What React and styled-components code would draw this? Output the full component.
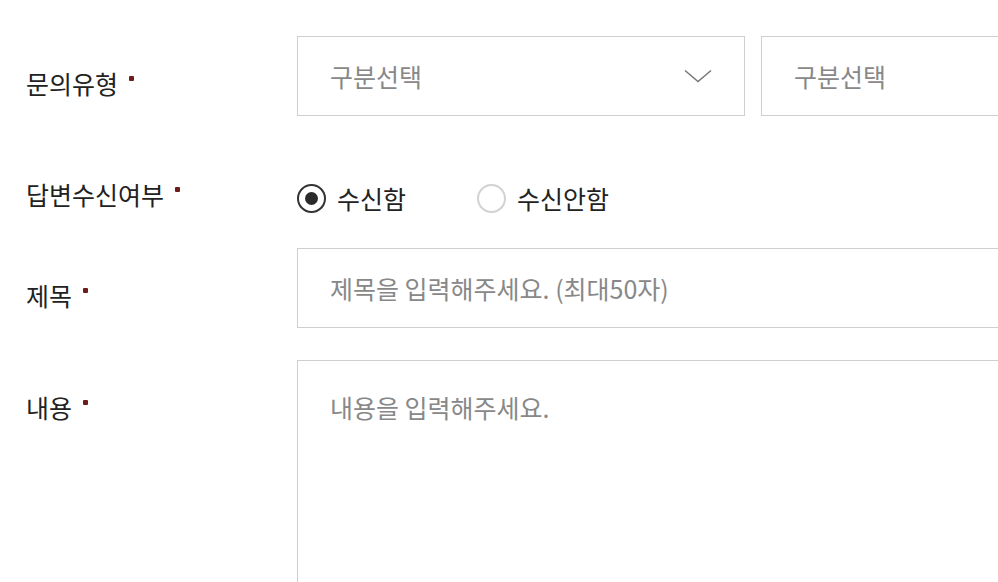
import React from "react";
import styled, { createGlobalStyle } from "styled-components";

const Global = createGlobalStyle`
  html, body { margin: 0; padding: 0; background: #fff; }
  body { font-family: "Noto Sans CJK KR", "Noto Sans", sans-serif; color: #222; overflow: hidden; }
  * { box-sizing: border-box; }
`;

const Form = styled.form`
  display: flex;
  flex-direction: column;
  padding: 36px 0 0 26px;
  width: 1100px;
`;

const Row = styled.div`
  display: grid;
  grid-template-columns: 271px 1fr;
  align-items: start;
  margin-top: ${(p) => p.$mt || 0}px;
`;

const Label = styled.div`
  font-size: 25px;
  line-height: 34px;
  color: #222;
  padding-top: ${(p) => (p.$pt != null ? p.$pt : 30)}px;
  display: flex;
  align-items: flex-start;
`;

const Req = styled.span`
  display: inline-block;
  width: 5px;
  height: 5px;
  border-radius: 1px;
  background: #6e1b1b;
  margin-left: 11px;
  margin-top: 10px;
`;

const Selects = styled.div`
  display: flex;
  gap: 16px;
`;

const SelectBox = styled.div`
  position: relative;
  width: 448px;
  height: 80px;
  border: 1px solid #cfcfcf;
  display: flex;
  align-items: center;
  padding: 0 32px;
  font-size: 25px;
  color: #888;
  justify-content: space-between;
`;

const Radios = styled.div`
  display: flex;
  align-items: center;
  height: 44px;
`;

const RadioItem = styled.label`
  display: flex;
  align-items: center;
  gap: 11px;
  font-size: 25px;
  color: #222;
  margin-right: 71px;
`;

const RadioCircle = styled.span`
  width: 29px;
  height: 29px;
  border-radius: 50%;
  border: 2px solid ${(p) => (p.$on ? "#333" : "#d2d2d2")};
  display: flex;
  align-items: center;
  justify-content: center;
  &::after {
    content: "";
    display: ${(p) => (p.$on ? "block" : "none")};
    width: 13px;
    height: 13px;
    border-radius: 50%;
    background: #2a2a2a;
  }
`;

const TextBox = styled.div`
  height: ${(p) => p.$h || 80}px;
  border: 1px solid #cfcfcf;
  border-right: none;
  display: flex;
  align-items: ${(p) => (p.$top ? "flex-start" : "center")};
  padding: ${(p) => (p.$top ? "28px 32px" : "0 32px")};
  font-size: 25px;
  color: #888;
`;

const Chevron = () => (
  <svg width="28" height="14" viewBox="0 0 28 14" fill="none">
    <path d="M1 1.5 L14 12.5 L27 1.5" stroke="#777" strokeWidth="1.5" />
  </svg>
);

export default function App() {
  return (
    <>
      <Global />
      <Form>
        <Row>
          <Label>
            문의유형<Req />
          </Label>
          <Selects>
            <SelectBox>
              구분선택
              <Chevron />
            </SelectBox>
            <SelectBox>구분선택</SelectBox>
          </Selects>
        </Row>
        <Row $mt={60}>
          <Label $pt={1}>
            답변수신여부<Req />
          </Label>
          <Radios>
            <RadioItem>
              <RadioCircle $on />
              수신함
            </RadioItem>
            <RadioItem>
              <RadioCircle />
              수신안함
            </RadioItem>
          </Radios>
        </Row>
        <Row $mt={28}>
          <Label>
            제목<Req />
          </Label>
          <TextBox>제목을 입력해주세요. (최대50자)</TextBox>
        </Row>
        <Row $mt={32}>
          <Label>
            내용<Req />
          </Label>
          <TextBox $h={300} $top>
            내용을 입력해주세요.
          </TextBox>
        </Row>
      </Form>
    </>
  );
}
